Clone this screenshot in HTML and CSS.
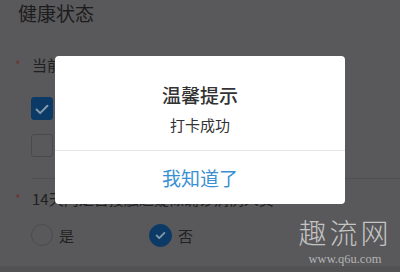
FILE: index.html
```html
<!DOCTYPE html>
<html lang="zh-CN">
<head>
<meta charset="utf-8">
<title>健康状态</title>
<link rel="stylesheet" href="styles.css">
</head>
<body>
<div class="page">
  <div class="header">健康状态</div>
  <div class="question"><span class="star">*</span><span>当前身体状况（可多选）</span></div>
  <div class="checks">
    <div class="check-row"><span class="box on"><svg viewBox="0 0 22 22" width="22" height="22"><path d="M5 11.5l4 4 8-8" fill="none" stroke="#8599ab" stroke-width="2.2" stroke-linecap="round" stroke-linejoin="round"/></svg></span><span class="lbl">正常</span></div>
    <div class="check-row"><span class="box"></span><span class="lbl">发热</span></div>
  </div>
  <div class="divider"></div>
  <div class="question q2"><span class="star">*</span><span>14天内是否接触过疑似确诊病例人员</span></div>
  <div class="radios">
    <div class="radio-item"><span class="circle"></span><span>是</span></div>
    <div class="radio-item"><span class="circle on"><svg viewBox="0 0 24 24" width="24" height="24"><path d="M7.5 12.5l3 3 6-6" fill="none" stroke="#8599ab" stroke-width="2" stroke-linecap="round" stroke-linejoin="round"/></svg></span><span>否</span></div>
  </div>
  <div class="bottom"></div>

  <div class="watermark">
    <div class="wm-big">趣流网</div>
    <div class="wm-url">www.q6u.com</div>
  </div>

  <div class="dialog">
    <div class="dialog-body">
      <div class="dialog-title">温馨提示</div>
      <div class="dialog-msg">打卡成功</div>
    </div>
    <div class="dialog-btn">我知道了</div>
  </div>
</div>
</body>
</html>
```
FILE: styles.css
```css
html, body {
  margin: 0;
  padding: 0;
}
body {
  background: #59595b;
  font-family: "Noto Sans CJK SC", "Noto Sans", sans-serif;
  color: #202020;
}
.page {
  position: relative;
  width: 400px;
  height: 272px;
  overflow: hidden;
  display: flex;
  flex-direction: column;
}
.header {
  padding: 1px 0 0 18px;
  font-size: 19px;
  line-height: 23px;
  height: 23px;
  color: #1c1c1c;
}
.question {
  margin-top: 31px;
  display: flex;
  align-items: center;
  font-size: 15px;
  line-height: 20px;
  height: 20px;
  white-space: nowrap;
}
.star {
  width: 32px;
  padding-left: 15px;
  box-sizing: border-box;
  color: #6e3434;
  font-size: 12px;
}
.checks {
  margin-top: 22px;
  padding-left: 31px;
  display: flex;
  flex-direction: column;
  gap: 14px;
}
.check-row {
  display: flex;
  align-items: center;
  gap: 8px;
  font-size: 15px;
  height: 23px;
}
.box {
  width: 22px;
  height: 23px;
  box-sizing: border-box;
  border: 1px solid #4a4a4c;
  border-radius: 3px;
  display: flex;
  align-items: center;
  justify-content: center;
}
.box.on {
  background: #0c3a66;
  border-color: #0c3a66;
}
.divider {
  margin: 21px 0 0 31px;
  height: 1px;
  background: #505052;
}
.question.q2 {
  margin-top: 10px;
}
.radios {
  margin-top: 15px;
  padding-left: 31px;
  display: flex;
  align-items: center;
  height: 22px;
  gap: 75px;
}
.radio-item {
  display: flex;
  align-items: center;
  gap: 6px;
  font-size: 15px;
  color: #222;
}
.circle {
  width: 22px;
  height: 22px;
  box-sizing: border-box;
  border: 1px solid #4c4c4e;
  border-radius: 50%;
  display: flex;
  align-items: center;
  justify-content: center;
}
.circle.on {
  width: 23px;
  height: 23px;
  background: #0c3a66;
  border-color: #0c3a66;
}
.bottom {
  margin-top: auto;
  height: 6px;
  background: #525254;
}
.watermark {
  position: absolute;
  left: 298px;
  top: 216px;
  width: 94px;
  text-align: center;
  color: #c4c4c4;
}
.wm-big {
  font-size: 28px;
  line-height: 32px;
  letter-spacing: 3px;
  font-weight: 300;
}
.wm-url {
  margin-top: 5px;
  font-family: "Liberation Serif", serif;
  font-size: 12.5px;
  line-height: 13px;
  color: #b4b4b4;
}
.dialog {
  position: absolute;
  left: 55px;
  top: 56px;
  width: 290px;
  height: 148px;
  background: #fff;
  border-radius: 4px;
  display: flex;
  flex-direction: column;
}
.dialog-body {
  padding: 27px 0 15px;
  text-align: center;
  border-bottom: 1px solid #e6e6e6;
}
.dialog-title {
  font-size: 19px;
  line-height: 24px;
  color: #333;
  font-weight: 500;
}
.dialog-msg {
  margin-top: 8px;
  font-size: 15px;
  line-height: 20px;
  color: #333;
}
.dialog-btn {
  flex: 1;
  display: flex;
  align-items: center;
  justify-content: center;
  font-size: 19px;
  color: #3a8fd2;
}
```
